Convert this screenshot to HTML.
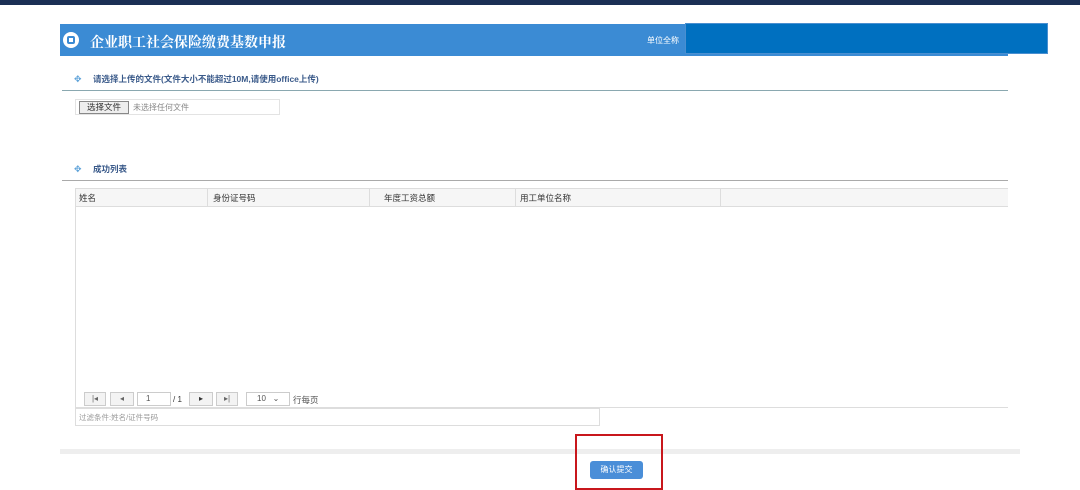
<!DOCTYPE html>
<html><head><meta charset="utf-8"><style>
*{margin:0;padding:0;box-sizing:border-box}
body{width:1080px;height:485px;background:#fff;position:relative;overflow:hidden;font-family:"Liberation Sans","Noto Sans CJK SC",sans-serif;}
.a{position:absolute}
.t{font-size:9px;color:#333;white-space:nowrap}
.pb{position:absolute;top:392px;height:14px;border:1px solid #ccc;background:#f3f3f3;font-size:8px;color:#666;text-align:center;line-height:12px}
</style></head><body>
<div class="a" style="left:0;top:0;width:1080px;height:5px;background:#1b2f55"></div>
<div class="a" style="left:60px;top:24px;width:948px;height:32px;background:#3b8bd4"></div>
<div class="a" style="left:63px;top:32px;width:16px;height:16px;border-radius:50%;background:#fff"></div>
<div class="a" style="left:67px;top:36px;width:8px;height:8px;border:2px solid #3b8bd4;border-radius:2px"></div>
<div class="a" style="left:90px;top:32px;font-size:14px;font-weight:bold;color:#fff;font-family:'Noto Serif CJK SC',serif">企业职工社会保险缴费基数申报</div>
<div class="a" style="left:647px;top:35px;font-size:8px;color:#fff">单位全称</div>
<div class="a" style="left:685px;top:23px;width:363px;height:31px;background:#0070c0;border:1px solid #4a8fd0"></div>
<div class="a" style="left:74px;top:74px;color:#5aa0d8;font-size:9px">✥</div>
<div class="a t" style="left:93px;top:73px;font-size:8.5px;font-weight:bold;color:#3a5a8a">请选择上传的文件(文件大小不能超过10M,请使用office上传)</div>
<div class="a" style="left:62px;top:90px;width:946px;height:1px;background:#8aa8b0"></div>
<div class="a" style="left:75px;top:99px;width:205px;height:16px;border:1px solid #e3e3e3"></div>
<div class="a t" style="left:79px;top:101px;width:50px;height:13px;border:1px solid #888;background:#eee;font-size:8.5px;line-height:11px;text-align:center">选择文件</div>
<div class="a t" style="left:133px;top:102px;font-size:8px;color:#888">未选择任何文件</div>
<div class="a" style="left:74px;top:164px;color:#5aa0d8;font-size:9px">✥</div>
<div class="a t" style="left:93px;top:163px;font-size:8.5px;font-weight:bold;color:#3a5a8a">成功列表</div>
<div class="a" style="left:62px;top:180px;width:946px;height:1px;background:#aaa"></div>
<div class="a" style="left:75px;top:188px;width:933px;height:220px;border:1px solid #ddd;border-right:none"></div>
<div class="a" style="left:76px;top:189px;width:932px;height:18px;background:#f6f6f6;border-bottom:1px solid #ddd"></div>
<div class="a" style="left:207px;top:189px;width:1px;height:18px;background:#ddd"></div>
<div class="a" style="left:369px;top:189px;width:1px;height:18px;background:#ddd"></div>
<div class="a" style="left:515px;top:189px;width:1px;height:18px;background:#ddd"></div>
<div class="a" style="left:720px;top:189px;width:1px;height:18px;background:#ddd"></div>
<div class="a t" style="left:79px;top:192px;font-size:8.5px">姓名</div>
<div class="a t" style="left:213px;top:192px;font-size:8.5px">身份证号码</div>
<div class="a t" style="left:384px;top:192px;font-size:8.5px">年度工资总额</div>
<div class="a t" style="left:520px;top:192px;font-size:8.5px">用工单位名称</div>
<div class="pb" style="left:84px;width:22px">|◂</div>
<div class="pb" style="left:110px;width:24px">◂</div>
<div class="a" style="left:137px;top:392px;width:34px;height:14px;border:1px solid #ccc;font-size:8px;padding-left:8px;line-height:12px;color:#555">1</div>
<div class="a t" style="left:173px;top:395px;font-size:8px">/ 1</div>
<div class="pb" style="left:189px;width:24px;color:#333">▸</div>
<div class="pb" style="left:216px;width:22px">▸|</div>
<div class="a" style="left:246px;top:392px;width:44px;height:14px;border:1px solid #ccc;font-size:8px;padding-left:10px;line-height:12px;color:#555">10 &nbsp; ⌄</div>
<div class="a t" style="left:293px;top:394px;font-size:8.5px;color:#555">行每页</div>
<div class="a" style="left:75px;top:408px;width:525px;height:18px;border:1px solid #ddd"></div>
<div class="a t" style="left:79px;top:412px;font-size:7.5px;color:#999">过滤条件:姓名/证件号码</div>
<div class="a" style="left:60px;top:449px;width:960px;height:5px;background:#eee"></div>
<div class="a" style="left:590px;top:461px;width:53px;height:18px;background:#4a8ed8;border-radius:3px;color:#fff;font-size:8px;text-align:center;line-height:18px">确认提交</div>
<div class="a" style="left:575px;top:434px;width:88px;height:56px;border:2px solid #c8171c"></div>
</body></html>
